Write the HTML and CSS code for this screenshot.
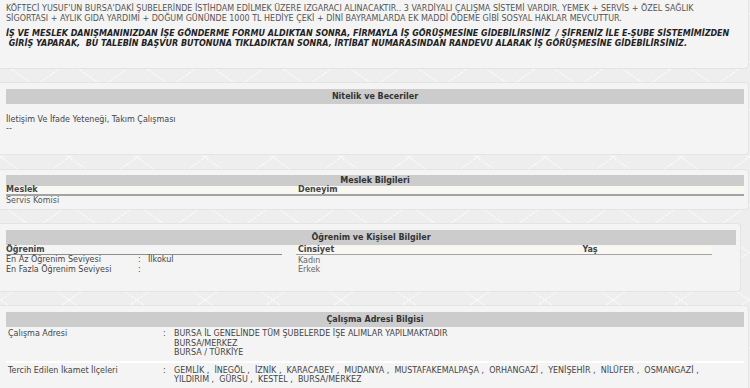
FILE: index.html
```html
<!DOCTYPE html>
<html lang="tr">
<head>
    <meta charset="UTF-8">
    <meta name="viewport" content="width=device-width, initial-scale=1.0">
    <title>İş İlanı Detayı</title>
    <link rel="stylesheet" href="styles.css">
</head>
<body>
    <div class="page">
        <div class="panel panel-intro">
            <p class="desc">KÖFTECİ YUSUF'UN BURSA'DAKİ ŞUBELERİNDE İSTİHDAM EDİLMEK ÜZERE IZGARACI ALINACAKTIR.. 3 VARDİYALI ÇALIŞMA SİSTEMİ VARDIR. YEMEK + SERVİS + ÖZEL SAĞLIK SİGORTASI + AYLIK GIDA YARDIMI + DOĞUM GÜNÜNDE 1000 TL HEDİYE ÇEKİ + DİNİ BAYRAMLARDA EK MADDİ ÖDEME GİBİ SOSYAL HAKLAR MEVCUTTUR.</p>
            <p class="note">İŞ VE MESLEK DANIŞMANINIZDAN İŞE GÖNDERME FORMU ALDIKTAN SONRA, FİRMAYLA İŞ GÖRÜŞMESİNE GİDEBİLİRSİNİZ &nbsp;/ ŞİFRENİZ İLE E-ŞUBE SİSTEMİMİZDEN &nbsp;GİRİŞ YAPARAK, &nbsp;BU TALEBİN BAŞVUR BUTONUNA TIKLADIKTAN SONRA, İRTİBAT NUMARASINDAN RANDEVU ALARAK İŞ GÖRÜŞMESİNE GİDEBİLİRSİNİZ.</p>
        </div>

        <div class="panel panel-skills">
            <div class="panel-title">Nitelik ve Beceriler</div>
            <div class="skills">
                <div>İletişim Ve İfade Yeteneği, Takım Çalışması</div>
                <div>--</div>
            </div>
        </div>

        <div class="panel panel-job">
            <div class="panel-title short">Meslek Bilgileri</div>
            <div class="col-head">
                <span class="col-job">Meslek</span>
                <span>Deneyim</span>
            </div>
            <div class="job-row">Servis Komisi</div>
        </div>

        <div class="panel panel-edu">
            <div class="panel-title">Öğrenim ve Kişisel Bilgiler</div>
            <div class="edu-grid">
                <div class="edu">
                    <div class="edu-head">Öğrenim</div>
                    <div class="kv"><span class="k">En Az Öğrenim Seviyesi</span><span class="c">:</span><span>İlkokul</span></div>
                    <div class="kv"><span class="k">En Fazla Öğrenim Seviyesi</span><span class="c">:</span><span></span></div>
                </div>
                <div class="personal">
                    <div class="col-head personal-head">
                        <span class="col-sex">Cinsiyet</span>
                        <span class="col-age">Yaş</span>
                    </div>
                    <div class="sex">Kadın</div>
                    <div class="sex">Erkek</div>
                </div>
            </div>
        </div>

        <div class="panel panel-addr">
            <div class="panel-title">Çalışma Adresi Bilgisi</div>
            <div class="addr-row">
                <span class="k">Çalışma Adresi</span>
                <span class="c">:</span>
                <div>BURSA İL GENELİNDE TÜM ŞUBELERDE İŞE ALIMLAR YAPILMAKTADIR<br>BURSA/MERKEZ<br>BURSA / TÜRKİYE</div>
            </div>
            <div class="addr-row">
                <span class="k">Tercih Edilen İkamet İlçeleri</span>
                <span class="c">:</span>
                <div>GEMLİK , &nbsp;İNEGÖL , &nbsp;İZNİK , &nbsp;KARACABEY , &nbsp;MUDANYA , &nbsp;MUSTAFAKEMALPAŞA , &nbsp;ORHANGAZİ , &nbsp;YENİŞEHİR , &nbsp;NİLÜFER , &nbsp;OSMANGAZİ ,<br>YILDIRIM , &nbsp;GÜRSU , &nbsp;KESTEL , &nbsp;BURSA/MERKEZ</div>
            </div>
        </div>
    </div>
</body>
</html>
```

FILE: styles.css
```css
body {
    margin: 0;
    font-family: "DejaVu Sans", Verdana, sans-serif;
    font-size: 8px;
    line-height: 10px;
    color: #444;
    background-color: #eeeeee;
    background-image:
        repeating-linear-gradient(35deg, transparent 0 38px, rgba(255, 255, 255, 0.55) 38px 39px),
        repeating-linear-gradient(-35deg, transparent 0 38px, rgba(255, 255, 255, 0.55) 38px 39px);
    overflow: hidden;
}
.page {
    width: 750px;
}
.panel {
    background-color: #f4f4f4;
    border: 1px solid #e4e4e4;
    border-left: none;
    border-radius: 0 4px 4px 0;
    margin-right: 1px;
    padding: 6px 4px 6px 6px;
    margin-bottom: 13px;
}
p {
    margin: 0;
}
.panel-intro {
    border-top: none;
    border-radius: 0 0 4px 0;
    padding-top: 4px;
    padding-right: 16px;
    padding-bottom: 19px;
    color: #555;
}
.note {
    margin-top: 5px;
    font-weight: bold;
    font-style: italic;
    color: #222;
}
.panel-title {
    background-color: #cccccc;
    text-align: center;
    font-weight: bold;
    color: #333;
    height: 15px;
    line-height: 15px;
}
.panel-title.short {
    height: 11px;
    line-height: 12px;
}
.skills {
    padding: 11px 0 15px 0;
    line-height: 9px;
    color: #444;
}
.panel-skills {
    margin-bottom: 14px;
}
.col-head {
    background-color: #f8f7f1;
    border-bottom: 2px solid #a3a3a3;
    font-weight: bold;
    color: #444;
    height: 8px;
    line-height: 8px;
    display: flex;
}
.col-job {
    width: 292px;
}
.job-row {
    color: #555;
    line-height: 9px;
}
.panel-job {
    padding-top: 5px;
    padding-bottom: 4px;
}
.panel-edu {
    margin-right: 9px;
    padding-bottom: 16px;
}
.edu-grid {
    display: flex;
    gap: 14px;
}
.edu {
    width: 276px;
}
.edu-head {
    font-weight: bold;
    color: #444;
    border-bottom: 1px solid #8c8c8c;
    height: 8px;
    line-height: 8px;
    padding-top: 1px;
}
.kv {
    display: flex;
    height: 10px;
    line-height: 10px;
}
.k {
    width: 132px;
    flex-shrink: 0;
}
.c {
    width: 10px;
    flex-shrink: 0;
}
.personal {
    width: 416px;
}
.personal-head {
    margin-top: 1px;
    border-bottom-width: 1px;
}
.col-sex {
    width: 170px;
    padding-left: 2px;
}
.col-age {
    flex: 1;
    text-align: center;
}
.sex {
    padding-left: 2px;
    color: #666;
    line-height: 9px;
}
.sex:nth-child(2) {
    margin-top: 1px;
}
.panel-addr {
    margin-bottom: 0;
    border-bottom: none;
}
.addr-row {
    display: flex;
    padding: 2px 2px 3px 2px;
    line-height: 9.5px;
}
.addr-row + .addr-row {
    border-top: 2px solid #ffffff;
    padding-top: 3px;
}
.addr-row .k {
    width: 155px;
}
.addr-row .c {
    width: 11px;
}
```
